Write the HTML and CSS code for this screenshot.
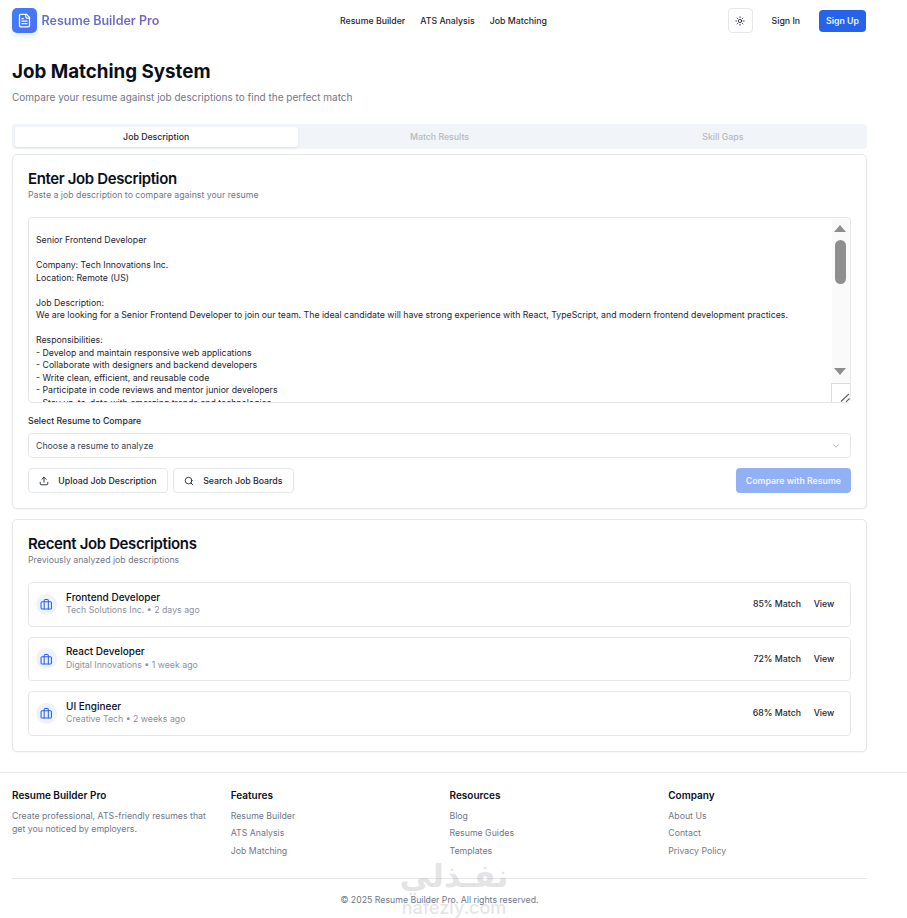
FILE: index.html
```html
<!DOCTYPE html>
<html lang="en">
<head>
<meta charset="utf-8">
<title>Job Matching System</title>
<link rel="stylesheet" href="styles.css">
</head>
<body>
<header class="topbar">
  <div class="brand">
    <span class="brand-mark">
      <svg width="15" height="15" viewBox="0 0 24 24" fill="none" stroke="#fff" stroke-width="2" stroke-linecap="round" stroke-linejoin="round"><path d="M15 2H6a2 2 0 0 0-2 2v16a2 2 0 0 0 2 2h12a2 2 0 0 0 2-2V7Z"/><path d="M14 2v4a2 2 0 0 0 2 2h4"/><path d="M10 9H8"/><path d="M16 13H8"/><path d="M16 17H8"/></svg>
    </span>
    <span class="brand-name">Resume Builder Pro</span>
  </div>
  <nav class="nav">
    <a>Resume Builder</a><a>ATS Analysis</a><a>Job Matching</a>
  </nav>
  <div class="actions">
    <button class="theme-btn">
      <svg width="10" height="10" viewBox="0 0 24 24" fill="none" stroke="#111827" stroke-width="2" stroke-linecap="round"><circle cx="12" cy="12" r="4"/><path d="M12 2v2"/><path d="M12 20v2"/><path d="m4.93 4.93 1.41 1.41"/><path d="m17.66 17.66 1.41 1.41"/><path d="M2 12h2"/><path d="M20 12h2"/><path d="m6.34 17.66-1.41 1.41"/><path d="m19.07 4.93-1.41 1.41"/></svg>
    </button>
    <a class="signin">Sign In</a>
    <a class="signup">Sign Up</a>
  </div>
</header>

<main class="page">
  <h1>Job Matching System</h1>
  <p class="lead">Compare your resume against job descriptions to find the perfect match</p>

  <div class="tabs">
    <div class="tab active">Job Description</div>
    <div class="tab">Match Results</div>
    <div class="tab">Skill Gaps</div>
  </div>

  <section class="card">
    <h2>Enter Job Description</h2>
    <p class="sub">Paste a job description to compare against your resume</p>
    <div class="jd-wrap">
      <textarea class="jd" readonly>

Senior Frontend Developer

Company: Tech Innovations Inc.
Location: Remote (US)

Job Description:
We are looking for a Senior Frontend Developer to join our team. The ideal candidate will have strong experience with React, TypeScript, and modern frontend development practices.

Responsibilities:
- Develop and maintain responsive web applications
- Collaborate with designers and backend developers
- Write clean, efficient, and reusable code
- Participate in code reviews and mentor junior developers
- Stay up-to-date with emerging trends and technologies

Requirements:
- 5+ years of experience in frontend development
- Strong proficiency in React and TypeScript
- Experience with state management libraries
- Knowledge of modern CSS and responsive design
- Excellent communication skills

Benefits:
- Competitive salary and equity
- Remote work options
- Health insurance</textarea>
      <div class="sb" aria-hidden="true">
        <span class="sb-up"></span>
        <span class="sb-thumb"></span>
        <span class="sb-down"></span>
      </div>
      <div class="grip" aria-hidden="true">
        <svg width="10" height="9" viewBox="0 0 10 9" fill="none" stroke="#5a5a5a" stroke-width="1.1"><path d="M1 8.5 9 .8"/><path d="M6 8.8 9.5 5.5"/></svg>
      </div>
    </div>
    <label class="field-label">Select Resume to Compare</label>
    <div class="select">
      <span>Choose a resume to analyze</span>
      <svg width="10" height="10" viewBox="0 0 24 24" fill="none" stroke="#9ca3af" stroke-width="2" stroke-linecap="round" stroke-linejoin="round"><path d="m6 9 6 6 6-6"/></svg>
    </div>
    <div class="button-row">
      <button class="btn">
        <svg width="10" height="10" viewBox="0 0 24 24" fill="none" stroke="#111827" stroke-width="2" stroke-linecap="round" stroke-linejoin="round"><path d="M21 15v4a2 2 0 0 1-2 2H5a2 2 0 0 1-2-2v-4"/><path d="m17 8-5-5-5 5"/><path d="M12 3v12"/></svg>
        Upload Job Description
      </button>
      <button class="btn">
        <svg width="10" height="10" viewBox="0 0 24 24" fill="none" stroke="#111827" stroke-width="2" stroke-linecap="round" stroke-linejoin="round"><circle cx="11" cy="11" r="8"/><path d="m21 21-4.3-4.3"/></svg>
        Search Job Boards
      </button>
      <button class="btn-primary">Compare with Resume</button>
    </div>
  </section>

  <section class="card recent">
    <h2>Recent Job Descriptions</h2>
    <p class="sub">Previously analyzed job descriptions</p>
    <div class="jobs">
      <div class="job">
        <span class="job-icon"><svg width="12.5" height="12.5" viewBox="0 0 24 24" fill="none" stroke="#2563eb" stroke-width="2" stroke-linecap="round" stroke-linejoin="round"><rect x="2" y="7" width="20" height="14" rx="2"/><path d="M16 21V5a2 2 0 0 0-2-2h-4a2 2 0 0 0-2 2v16"/></svg></span>
        <div class="job-text"><div class="job-title">Frontend Developer</div><div class="job-meta">Tech Solutions Inc. • 2 days ago</div></div>
        <span class="match">85% Match</span><a class="view">View</a>
      </div>
      <div class="job">
        <span class="job-icon"><svg width="12.5" height="12.5" viewBox="0 0 24 24" fill="none" stroke="#2563eb" stroke-width="2" stroke-linecap="round" stroke-linejoin="round"><rect x="2" y="7" width="20" height="14" rx="2"/><path d="M16 21V5a2 2 0 0 0-2-2h-4a2 2 0 0 0-2 2v16"/></svg></span>
        <div class="job-text"><div class="job-title">React Developer</div><div class="job-meta">Digital Innovations • 1 week ago</div></div>
        <span class="match">72% Match</span><a class="view">View</a>
      </div>
      <div class="job">
        <span class="job-icon"><svg width="12.5" height="12.5" viewBox="0 0 24 24" fill="none" stroke="#2563eb" stroke-width="2" stroke-linecap="round" stroke-linejoin="round"><rect x="2" y="7" width="20" height="14" rx="2"/><path d="M16 21V5a2 2 0 0 0-2-2h-4a2 2 0 0 0-2 2v16"/></svg></span>
        <div class="job-text"><div class="job-title">UI Engineer</div><div class="job-meta">Creative Tech • 2 weeks ago</div></div>
        <span class="match">68% Match</span><a class="view">View</a>
      </div>
    </div>
  </section>
</main>

<footer class="footer">
  <div class="footer-inner">
    <div class="footer-cols">
      <div class="col">
        <h3>Resume Builder Pro</h3>
        <p>Create professional, ATS-friendly resumes that get you noticed by employers.</p>
      </div>
      <div class="col">
        <h3>Features</h3>
        <a>Resume Builder</a><a>ATS Analysis</a><a>Job Matching</a>
      </div>
      <div class="col">
        <h3>Resources</h3>
        <a>Blog</a><a>Resume Guides</a><a>Templates</a>
      </div>
      <div class="col">
        <h3>Company</h3>
        <a>About Us</a><a>Contact</a><a>Privacy Policy</a>
      </div>
    </div>
    <div class="copyright">© 2025 Resume Builder Pro. All rights reserved.</div>
  </div>
</footer>
<div class="watermark"><div class="wm-ar">نفـذلي</div><div class="wm-en">nafezly.com</div></div>
</body>
</html>
```
FILE: styles.css
```css
* { box-sizing: border-box; }
html, body { margin: 0; padding: 0; }
body {
  position: relative;
  width: 907px;
  height: 918px;
  overflow: hidden;
  background: #fff;
  color: #0a0f1c;
  font-family: Inter, "Liberation Sans", sans-serif;
}
button { font-family: inherit; }

.topbar {
  display: flex;
  justify-content: space-between;
  align-items: center;
  height: 41px;
  padding: 0 41px 0 12px;
}
.brand { display: flex; align-items: center; gap: 4.5px; }
.brand-mark {
  display: flex;
  align-items: center;
  justify-content: center;
  width: 25px;
  height: 25px;
  border-radius: 5px;
  background: linear-gradient(135deg, #3b82f6, #4f6ef0);
  box-shadow: 0 4px 6px -1px rgba(59, 130, 246, .2);
}
.brand-name {
  font-size: 12.5px;
  font-weight: 600;
  color: #6d66c4;
  background: linear-gradient(90deg, #5f70cc, #7862c2);
  -webkit-background-clip: text;
  background-clip: text;
  -webkit-text-fill-color: transparent;
  white-space: nowrap;
}
.nav { display: flex; gap: 15px; font-size: 8.75px; font-weight: 500; color: #1f2430; }
.actions { display: flex; align-items: center; justify-content: flex-end; }
.theme-btn {
  display: flex;
  align-items: center;
  justify-content: center;
  width: 25px;
  height: 25px;
  padding: 0;
  background: #fff;
  border: 1px solid #e5e7eb;
  border-radius: 4px;
}
.signin { margin-left: 19px; font-size: 8.75px; font-weight: 500; color: #1f2430; }
.signup {
  margin-left: 19px;
  display: block;
  padding: 0 7px;
  line-height: 22px;
  font-size: 8.75px;
  font-weight: 600;
  color: #eef4ff;
  background: #2563eb;
  border-radius: 4px;
}

.page { padding: 21px 40px 0 12px; }
h1 { margin: 0; font-size: 18.75px; line-height: 20px; font-weight: 700; color: #0a0f1c; }
.lead { margin: 8.5px 0 0; font-size: 10px; line-height: 12px; color: #6f7787; }

.tabs {
  display: grid;
  grid-template-columns: repeat(3, 1fr);
  height: 25px;
  margin-top: 21.5px;
  padding: 2.5px;
  background: #f1f5f9;
  border-radius: 4px;
}
.tab {
  display: flex;
  align-items: center;
  justify-content: center;
  font-size: 8.75px;
  font-weight: 500;
  color: #b4b9c3;
}
.tab.active {
  background: #fff;
  border-radius: 3px;
  color: #1f2430;
  box-shadow: 0 1px 2px rgba(0, 0, 0, .08);
}

.card {
  margin-top: 5px;
  padding: 15px;
  background: #fff;
  border: 1px solid #e5e7eb;
  border-radius: 5px;
  box-shadow: 0 1px 2px rgba(0, 0, 0, .04);
}
.recent { margin-top: 10px; }
h2 { margin: 0; font-size: 15px; line-height: 17px; font-weight: 600; letter-spacing: -.025em; color: #0a0f1c; }
.sub { margin: 1.5px 0 0; font-size: 8.75px; line-height: 12px; color: #6f7787; }

.jd-wrap { position: relative; margin-top: 16.5px; }
.jd {
  display: block;
  width: 100%;
  height: 186px;
  padding: 3.5px 7px;
  border: 1px solid #e5e7eb;
  border-radius: 4px;
  outline: none;
  resize: none;
  overflow: hidden;
  background: #fff;
  color: #1f2430;
  font-family: inherit;
  font-size: 8.75px;
  line-height: 12.5px;
}
.sb {
  position: absolute;
  top: 1px;
  right: 1px;
  bottom: 1px;
  width: 18px;
  background: #fafafa;
  border-radius: 0 3px 3px 0;
}
.sb-up, .sb-down, .sb-thumb { position: absolute; display: block; }
.sb-up {
  top: 7px;
  left: 2px;
  border-left: 6.5px solid transparent;
  border-right: 6.5px solid transparent;
  border-bottom: 7px solid #8f8f8f;
}
.sb-down {
  top: 150px;
  left: 2px;
  border-left: 6.5px solid transparent;
  border-right: 6.5px solid transparent;
  border-top: 7px solid #8f8f8f;
}
.sb-thumb {
  top: 22px;
  left: 3px;
  width: 11px;
  height: 44px;
  background: #8f8f8f;
  border-radius: 6px;
}
.grip {
  position: absolute;
  right: 1px;
  bottom: 1px;
  width: 19px;
  height: 19px;
  padding: 9px 0 0 8px;
  background: #fff;
  border-top: 1px solid #dcdcdc;
  border-left: 1px solid #dcdcdc;
  display: flex;
}
.field-label { display: block; margin-top: 12px; font-size: 8.75px; line-height: 12px; font-weight: 500; color: #1f2430; }
.select {
  display: flex;
  align-items: center;
  justify-content: space-between;
  height: 25px;
  margin-top: 6px;
  padding: 0 9px 0 7px;
  border: 1px solid #e5e7eb;
  border-radius: 4px;
  font-size: 8.75px;
  color: #374151;
}
.button-row { display: flex; gap: 5px; margin-top: 10px; }
.btn {
  display: flex;
  align-items: center;
  gap: 9px;
  height: 25px;
  padding: 0 10.3px;
  background: #fff;
  border: 1px solid #e5e7eb;
  border-radius: 4px;
  font-size: 8.75px;
  font-weight: 500;
  color: #1f2430;
}
.btn-primary {
  height: 25px;
  margin-left: auto;
  padding: 0 10px;
  border: 0;
  border-radius: 4px;
  background: #92b1f5;
  color: #eef4ff;
  font-size: 8.75px;
  font-weight: 600;
}

.jobs { display: flex; flex-direction: column; gap: 10px; margin-top: 16.5px; }
.job {
  display: flex;
  align-items: center;
  height: 44.5px;
  padding: 0 7px;
  border: 1px solid #e5e7eb;
  border-radius: 4px;
}
.job-icon {
  display: flex;
  align-items: center;
  justify-content: center;
  width: 21px;
  height: 21px;
  border-radius: 50%;
  background: #eef2fd;
}
.job-text { flex: 1; margin-left: 9px; }
.job-title { font-size: 10px; line-height: 13.5px; font-weight: 500; color: #0a0f1c; }
.job-meta { font-size: 8.75px; line-height: 13.5px; color: #8a919e; }
.match { margin-right: 4px; font-size: 8.75px; font-weight: 500; color: #1f2430; }
.view { width: 38px; text-align: center; font-size: 8.75px; font-weight: 500; color: #1f2430; }

.footer { margin-top: 20.5px; border-top: 1px solid #e5e7eb; }
.footer-inner { padding: 16px 40px 0 12px; }
.footer-cols {
  display: grid;
  grid-template-columns: repeat(4, 1fr);
  gap: 20px;
  padding-bottom: 18px;
  border-bottom: 1px solid #e5e7eb;
}
.col h3 { margin: 0 0 6.5px; font-size: 10px; line-height: 12px; font-weight: 600; color: #0a0f1c; }
.col p { margin: 0; padding-top: 2px; font-size: 8.75px; line-height: 13px; color: #6f7787; }
.col a { display: block; font-size: 8.75px; line-height: 17.5px; color: #6f7787; }
.copyright { margin-top: 14.5px; text-align: center; font-size: 8.75px; line-height: 12px; color: #6f7787; }

.watermark {
  position: absolute;
  left: 389px;
  top: 853px;
  width: 130px;
  text-align: center;
  color: rgba(150, 150, 150, .25);
  pointer-events: none;
}
.wm-ar { font-family: "DejaVu Sans", sans-serif; font-size: 32px; line-height: 46px; font-weight: 700; }
.wm-en { font-size: 18px; line-height: 18px; font-weight: 500; }
```
